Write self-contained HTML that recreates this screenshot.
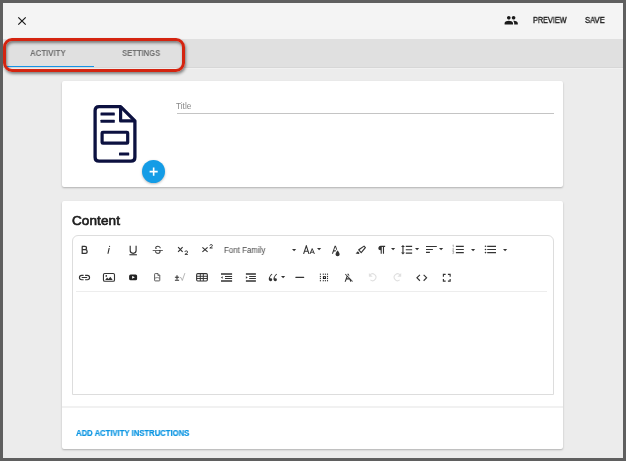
<!DOCTYPE html>
<html><head><meta charset="utf-8">
<style>
*{margin:0;padding:0;box-sizing:border-box}
html,body{width:626px;height:461px;overflow:hidden;background:#5f5f5f;font-family:"Liberation Sans",sans-serif}
.abs{position:absolute}
#frame{position:absolute;left:3px;top:3px;width:620px;height:455px;background:#ececec;overflow:hidden}
#hdr{position:absolute;left:0;top:0;width:620px;height:36px;background:#f4f4f4}
#tabs{position:absolute;left:0;top:36px;width:620px;height:28px;background:#e0e0e0}
.card{position:absolute;background:#fff;border-radius:2px;box-shadow:0 1px 2px rgba(0,0,0,.25)}
.t{position:absolute;white-space:nowrap;line-height:1;will-change:transform}
</style></head><body>
<div id="frame">
  <div id="hdr">
    <svg class="abs" style="left:14.2px;top:13.3px" width="10" height="10" viewBox="0 0 10 10"><path d="M1.3 1.3L8.7 8.7M8.7 1.3L1.3 8.7" stroke="#1a1a1a" stroke-width="1.2"/></svg>
    <svg class="abs" style="left:501.1px;top:10.2px" width="14.4" height="14.4" viewBox="0 0 24 24"><path d="M16 11c1.66 0 2.99-1.34 2.99-3S17.66 5 16 5c-1.66 0-3 1.34-3 3s1.34 3 3 3zm-8 0c1.66 0 2.99-1.34 2.99-3S9.66 5 8 5C6.34 5 5 6.34 5 8s1.34 3 3 3zm0 2c-2.33 0-7 1.170-7 3.5V19h14v-2.5c0-2.33-4.670-3.5-7-3.5zm8 0c-.29 0-.62.02-.97.05 1.16.84 1.97 1.97 1.970 3.45V19h6v-2.5c0-2.33-4.67-3.5-6-3.5z" fill="#1a1a1a"/></svg>
    <div class="t" style="left:529.5px;top:14.2px;font-size:8.2px;color:#1a1a1a;-webkit-text-stroke:0.35px #1a1a1a;transform:scaleX(0.89);transform-origin:0 0">PREVIEW</div>
    <div class="t" style="left:582px;top:14.2px;font-size:8.2px;color:#1a1a1a;-webkit-text-stroke:0.35px #1a1a1a;transform:scaleX(0.93);transform-origin:0 0">SAVE</div>
  </div>
  <div id="tabs">
    <div class="t" style="left:27px;top:10.3px;font-size:8.6px;font-weight:bold;color:#707070;transform:scaleX(0.91);transform-origin:0 0">ACTIVITY</div>
    <div class="t" style="left:118.8px;top:10.3px;font-size:8.6px;font-weight:bold;color:#707070;transform:scaleX(0.89);transform-origin:0 0">SETTINGS</div>
    <div class="abs" style="left:1px;top:26.6px;width:90px;height:1.7px;background:#1592e6"></div>
    <div class="abs" style="left:0;top:28px;width:620px;height:1px;background:#d7d7d7"></div>
    <div class="abs" style="left:0;top:29px;width:620px;height:1px;background:#f1f1f1"></div>
  </div>
  <!-- annotation -->
  <div class="abs" style="left:0px;top:35px;width:182px;height:34px;border:3px solid #d42410;border-radius:9px;box-shadow:1px 2px 3px rgba(0,0,0,.45), inset 1px 2px 3px rgba(0,0,0,.45)"></div>

  <div class="card" style="left:59px;top:78px;width:501px;height:106px">
    <svg class="abs" style="left:28px;top:19px" width="50" height="70" viewBox="90 100 50 70">
      <path d="M99.1 106.6H120.6L134.9 120.9V157.2Q134.9 161.2 130.9 161.2H99.1Q95.1 161.2 95.1 157.2V110.6Q95.1 106.6 99.1 106.6Z" fill="none" stroke="#0c1140" stroke-width="3.3" stroke-linejoin="round"/>
      <path d="M120.6 106.6V120.9H134.9" fill="none" stroke="#0c1140" stroke-width="3.2" stroke-linejoin="round"/>
      <rect x="100.5" y="112.5" width="14.3" height="3.1" rx="0.6" fill="#0c1140"/>
      <rect x="100.5" y="119.7" width="14.3" height="3.1" rx="0.6" fill="#0c1140"/>
      <rect x="102.1" y="132.25" width="25.6" height="10.95" rx="0.8" fill="none" stroke="#0c1140" stroke-width="3.2"/>
      <rect x="119" y="152.5" width="10.2" height="3.1" rx="0.6" fill="#0c1140"/>
    </svg>
    <div class="abs" style="left:79.5px;top:79.2px;width:23.3px;height:23.3px;border-radius:50%;background:#149ce6;box-shadow:0 1px 2.5px rgba(0,0,0,.28)">
      <svg class="abs" style="left:0;top:0" width="23.3" height="23.3" viewBox="0 0 23.3 23.3"><path d="M11.65 7.6v8.1M7.6 11.65h8.1" stroke="#fff" stroke-width="1.6"/></svg>
    </div>
    <div class="t" style="left:114.4px;top:20.6px;font-size:8.3px;color:#888">Title</div>
    <div class="abs" style="left:114.5px;top:31.6px;width:377.3px;height:1.3px;background:#c4c4c4"></div>
  </div>

  <div class="card" style="left:59px;top:198px;width:501px;height:248px">
    <div class="t" style="left:10px;top:12.6px;font-size:13.5px;font-weight:normal;-webkit-text-stroke:0.7px #1e1e1e;color:#1e1e1e;letter-spacing:0.1px;transform:scaleX(1);transform-origin:0 0">Content</div>
    <div class="abs" style="left:10px;top:34px;width:482px;height:160px;border:1px solid #dddddd;border-radius:6px 6px 0 0">
      <div class="abs" style="left:3px;top:55px;width:471px;height:1px;background:#ededed"></div>
    </div>
    <div class="abs" style="left:0;top:205px;width:501px;height:1.5px;background:#f1f1f1"></div>
    <div class="t" style="left:14px;top:228.6px;font-size:8.2px;font-weight:bold;color:#0b95e2;-webkit-text-stroke:0.2px #0b95e2;transform:scaleX(0.94);transform-origin:0 0">ADD ACTIVITY INSTRUCTIONS</div>
  </div>
<svg class="abs" style="left:75.00px;top:240.00px" width="14.00" height="14.00" viewBox="78 243 14 14"><path d="M82.2 246.4V253.3H85.3Q87.15 253.3 87.15 251.4Q87.15 249.55 85.3 249.55H82.2M82.2 249.55H84.9Q86.55 249.55 86.55 248Q86.55 246.4 84.9 246.4H81.8" fill="none" stroke="#333" stroke-width="1.25"/></svg>
<svg class="abs" style="left:99.22px;top:240.12px" width="13.56" height="13.56" viewBox="0 0 24 24"><path d="M11.76,9h2l-2.2,10h-2Zm1.68-4a1,1,0,1,0,1,1,1,1,0,0,0-1-1Z" fill="#333" /></svg>
<svg class="abs" style="left:123.00px;top:239.00px" width="15.00" height="16.00" viewBox="126 242 15 16"><path d="M130.2 245.8V250.6Q130.2 253.3 133.15 253.3Q136.1 253.3 136.1 250.6V245.8" fill="none" stroke="#333" stroke-width="1.15"/><path d="M129.4 254.75H136.9" stroke="#333" stroke-width="1.1"/></svg>
<svg class="abs" style="left:147.97px;top:240.12px" width="13.56" height="13.56" viewBox="0 0 24 24"><path d="M3,12.2H21v1.5H16.63a3.6,3.6,0,0,1,.35,1.59,3.25,3.25,0,0,1-1.31,2.7A5.55,5.55,0,0,1,12.2,19a6.44,6.44,0,0,1-2.62-.54,4.46,4.46,0,0,1-1.89-1.49,3.67,3.67,0,0,1-.67-2.16V14.7H9.02v.11a2.18,2.18,0,0,0,.85,1.83,3.69,3.69,0,0,0,2.33.68,3.39,3.39,0,0,0,2.08-.55,1.73,1.73,0,0,0,.7-1.47,1.7,1.7,0,0,0-.65-1.43,3,3,0,0,0-.27-.18H3ZM16.34,7.06A3.96,3.96,0,0,0,14.62,5.55,5.46,5.46,0,0,0,12.13,5,5.99,5.99,0,0,0,8.99,5.85,2.99,2.99,0,0,0,7.49,8.52,3.45,3.45,0,0,0,8.06,10.5H10.81a2.48,2.48,0,0,1-1.31-1.16,1.56,1.56,0,0,1-.08-.65,1.67,1.67,0,0,1,.72-1.44,3.87,3.87,0,0,1,2.34-.56,3.57,3.57,0,0,1,2.28.65,2.23,2.23,0,0,1,.83,1.81v.04h1.7V9.12A3.61,3.61,0,0,0,16.34,7.06Z" fill="#333" /></svg>
<svg class="abs" style="left:172.00px;top:241.00px" width="16.00" height="13.00" viewBox="175 244 16 13"><path d="M178.1 247.1L182.6 251.9M182.6 247.1L178.1 251.9" stroke="#333" stroke-width="1.15"/><path d="M184.8 251.9Q185 250.9 186.3 250.9Q187.6 250.9 187.6 252Q187.6 252.7 186.8 253.2L184.9 254.4H187.9" fill="none" stroke="#333" stroke-width="0.95"/></svg>
<svg class="abs" style="left:196.00px;top:239.00px" width="16.00" height="14.00" viewBox="199 242 16 14"><path d="M202.4 247.4L207.6 251.9M207.6 247.4L202.4 251.9" stroke="#333" stroke-width="1.15"/><path d="M209.8 245.5Q210 244.6 211.2 244.6Q212.4 244.6 212.4 245.6Q212.4 246.3 211.6 246.8L209.8 248H212.6" fill="none" stroke="#333" stroke-width="0.95"/></svg>
<div class="t" style="left:220.7px;top:242.9px;font-size:8.3px;color:#444;transform:scaleX(0.955);transform-origin:0 0">Font Family</div>
<svg class="abs" style="left:288.30px;top:244.50px" width="6.20" height="4.30" viewBox="291.3 247.5 6.199999999999989 4.300000000000011"><path d="M292.3 248.5H296.5L294.40000000000003 250.8Z" fill="#333"/></svg>
<svg class="abs" style="left:300.00px;top:242.30px" width="12.50" height="8.70" viewBox="0 0 12.5 8.7" preserveAspectRatio="none"><path d="M0.6 9L3.3 0.8L6 9M1.5 6.3H5.1" fill="none" stroke="#333" stroke-width="1.05"/><path d="M7 9L9.2 3.6L11.4 9M7.7 7.2H10.7" fill="none" stroke="#333" stroke-width="0.95"/></svg>
<svg class="abs" style="left:313.30px;top:244.30px" width="6.20" height="4.30" viewBox="316.3 247.3 6.199999999999989 4.300000000000011"><path d="M317.3 248.3H321.5L319.40000000000003 250.60000000000002Z" fill="#333"/></svg>
<svg class="abs" style="left:326.42px;top:240.12px" width="13.56" height="13.56" viewBox="0 0 24 24"><path d="M15.2,13.494s-3.6,3.9-3.6,6.3a3.65,3.65,0,0,0,7.3.1v-.1C18.9,17.394,15.2,13.494,15.2,13.494Zm-1.47-1.357.669-.724L12.1,5h-2l-5,14h2l1.43-4h2.943A24.426,24.426,0,0,1,13.726,12.137ZM11.1,6.9l2.152,6.1H8.9Z" fill="#333" /></svg>
<svg class="abs" style="left:350.72px;top:239.82px" width="13.56" height="13.56" viewBox="0 0 24 24"><path d="M9.91752,12.24082l7.74791-5.39017,1.17942,1.29591-6.094,7.20747L9.91752,12.24082M7.58741,12.652l4.53533,4.98327a.93412.93412,0,0,0,1.39531-.0909L20.96943,8.7314A.90827.90827,0,0,0,20.99075,7.533l-2.513-2.76116a.90827.90827,0,0,0-1.19509-.09132L7.809,11.27135A.93412.93412,0,0,0,7.58741,12.652ZM2.7939,18.52772,8.41126,19.5l1.47913-1.34617-3.02889-3.328Z" fill="#333" /></svg>
<svg class="abs" style="left:372.12px;top:240.12px" width="13.56" height="13.56" viewBox="0 0 24 24"><path d="M10.15,5A4.11,4.11,0,0,0,6.08,8.18,4,4,0,0,0,10,13v6h2V7h2V19h2V7h2V5Z" fill="#333" /></svg>
<svg class="abs" style="left:386.50px;top:244.30px" width="6.20" height="4.30" viewBox="389.5 247.3 6.199999999999989 4.300000000000011"><path d="M390.5 248.3H394.7L392.6 250.60000000000002Z" fill="#333"/></svg>
<svg class="abs" style="left:397.12px;top:239.72px" width="13.56" height="13.56" viewBox="0 0 24 24"><path d="M6.25,7h2.5L5.25,3.5,1.75,7h2.5V17H1.75l3.5,3.5L8.75,17H6.25Zm4-2V7H21.5V5Zm0,14H21.5V17H10.25Zm0-6H21.5V11H10.25Z" fill="#333" /></svg>
<svg class="abs" style="left:410.80px;top:244.30px" width="6.20" height="4.30" viewBox="413.8 247.3 6.199999999999989 4.300000000000011"><path d="M414.8 248.3H419.0L416.90000000000003 250.60000000000002Z" fill="#333"/></svg>
<svg class="abs" style="left:421.00px;top:240.00px" width="16.00" height="13.00" viewBox="424 243 16 13"><path d="M426 246.5H436.8M426 249.5H432.9M426 252.4H429.9" stroke="#333" stroke-width="1.15"/></svg>
<svg class="abs" style="left:435.20px;top:244.20px" width="6.20" height="4.30" viewBox="438.2 247.2 6.199999999999989 4.300000000000011"><path d="M439.2 248.2H443.4L441.3 250.5Z" fill="#333"/></svg>
<svg class="abs" style="left:447.00px;top:240.00px" width="17.00" height="13.00" viewBox="450 243 17 13"><path d="M455.9 246.3H463.8M455.9 249.5H463.8M455.9 252.6H463.8" stroke="#333" stroke-width="1.15"/><path d="M452.6 245.2L453.3 244.9V247.2M452.5 248.6Q452.8 248.2 453.3 248.3Q453.9 248.5 453.5 249.2L452.5 250.3H454M452.5 251.5H453.9L453.1 252.3Q453.9 252.5 453.8 253.2Q453.5 253.9 452.4 253.6" fill="none" stroke="#777" stroke-width="0.55"/></svg>
<svg class="abs" style="left:467.20px;top:244.50px" width="6.20" height="4.30" viewBox="470.2 247.5 6.199999999999989 4.300000000000011"><path d="M471.2 248.5H475.4L473.3 250.8Z" fill="#333"/></svg>
<svg class="abs" style="left:479.00px;top:240.00px" width="17.00" height="13.00" viewBox="482 243 17 13"><path d="M487.2 246.3H496M487.2 249.5H496M487.2 252.6H496" stroke="#333" stroke-width="1.15"/><circle cx="485.5" cy="246.3" r="0.8" fill="#333"/><circle cx="485.5" cy="249.5" r="0.8" fill="#333"/><circle cx="485.5" cy="252.6" r="0.8" fill="#333"/></svg>
<svg class="abs" style="left:499.30px;top:244.50px" width="6.20" height="4.30" viewBox="502.3 247.5 6.199999999999989 4.300000000000011"><path d="M503.3 248.5H507.5L505.40000000000003 250.8Z" fill="#333"/></svg>
<svg class="abs" style="left:73.00px;top:268.00px" width="18.00" height="14.00" viewBox="76 271 18 14"><path d="M83.6 275.4H81.6A2.15 2.15 0 0 0 81.6 279.7H83.6M85.1 275.4H87.4A2.15 2.15 0 0 1 87.4 279.7H85.1" fill="none" stroke="#333" stroke-width="1.15"/><path d="M82.1 277.55H86.8" stroke="#333" stroke-width="1.05" stroke-linecap="round"/></svg>
<svg class="abs" style="left:97.00px;top:267.00px" width="18.00" height="15.00" viewBox="100 270 18 15"><rect x="103.45" y="273.45" width="11.05" height="7.85" rx="1.3" fill="none" stroke="#333" stroke-width="1.1"/><circle cx="106.3" cy="275.9" r="0.85" fill="#333"/><path d="M105.2 279.9L107.1 277.5L108.5 278.9L110.3 276.8L112.7 279.9Z" fill="#333"/></svg>
<svg class="abs" style="left:123.00px;top:268.00px" width="14.00" height="13.00" viewBox="126 271 14 13"><rect x="129.1" y="274.5" width="8" height="5.75" rx="1.5" fill="#222"/><path d="M132.1 275.9L134.9 277.37L132.1 278.85Z" fill="#fff"/></svg>
<svg class="abs" style="left:151.20px;top:270.30px" width="6.40" height="8.50" viewBox="0 0 6.4 8.5" preserveAspectRatio="none"><path d="M1.2 0.6H4L5.8 2.4V7.3Q5.8 7.9 5.2 7.9H1.2Q0.6 7.9 0.6 7.3V1.2Q0.6 0.6 1.2 0.6z" fill="none" stroke="#555" stroke-width="0.95"/><path d="M3.9 0.6V2.5H5.8" fill="none" stroke="#555" stroke-width="0.8"/><path d="M0.6 5.2Q3.2 3.9 5.8 5.2" fill="none" stroke="#666" stroke-width="0.8"/></svg>
<svg class="abs" style="left:169.00px;top:267.00px" width="16.00" height="14.00" viewBox="172 270 16 14"><path d="M174.9 277.3H179.1M177 275.2V279.4M174.9 280.3H179.1" stroke="#333" stroke-width="1.1"/><path d="M179.8 277.9L180.9 277.4L182.3 280.5L184.9 273.1" fill="none" stroke="#9a9a9a" stroke-width="0.7"/></svg>
<svg class="abs" style="left:189.00px;top:267.00px" width="20.00" height="15.00" viewBox="192 270 20 15"><rect x="196.65" y="273.65" width="10.7" height="7.3" rx="1.1" fill="none" stroke="#333" stroke-width="1.1"/><path d="M200.3 273.6V281M203.3 273.6V281M196.6 276.3H207.4M196.6 278.5H207.4" stroke="#333" stroke-width="0.95"/></svg>
<svg class="abs" style="left:215.00px;top:267.00px" width="18.00" height="15.00" viewBox="218 270 18 15"><path d="M221 273.9H232.1M221 281.1H232.1" stroke="#333" stroke-width="1.5"/><path d="M225 276.5H232.1M225 278.5H232.1" stroke="#333" stroke-width="1"/><path d="M222.7 276.2L220.9 277.5L222.7 278.8Z" fill="#333"/></svg>
<svg class="abs" style="left:240.00px;top:267.00px" width="17.00" height="15.00" viewBox="243 270 17 15"><path d="M245.9 273.9H255.9M245.9 281.1H255.9" stroke="#333" stroke-width="1.5"/><path d="M249.2 276.5H255.9M249.2 278.5H255.9" stroke="#333" stroke-width="1"/><path d="M245.9 276.2L247.7 277.5L245.9 278.8Z" fill="#333"/></svg>
<svg class="abs" style="left:263.07px;top:268.12px" width="13.56" height="13.56" viewBox="0 0 24 24"><path d="M10.32,5l.94,1.32A12.88,12.88,0,0,0,8.17,9.4a5.54,5.54,0,0,0-1,3.08v.34q.36-.05.67-.08a4.8,4.8,0,0,1,.58-.04,2.52,2.52,0,0,1,1.87.74,2.49,2.49,0,0,1,.72,1.81,2.73,2.73,0,0,1-.75,1.94A2.68,2.68,0,0,1,8.23,18a3.11,3.11,0,0,1-2.43-1.06,3.94,3.94,0,0,1-.9-2.7A7.43,7.43,0,0,1,6.1,10.13,12.16,12.16,0,0,1,10.32,5Zm8.3,0,.94,1.32a12.88,12.88,0,0,0-3.09,3.08,5.54,5.54,0,0,0-1,3.08v.34q.33-.05.64-.08a4.38,4.38,0,0,1,.55-.04,2.53,2.53,0,0,1,1.88.74,2.47,2.47,0,0,1,.74,1.85,2.72,2.72,0,0,1-.76,1.94A2.7,2.7,0,0,1,16.53,18a3.08,3.08,0,0,1-2.41-1.06,3.97,3.97,0,0,1-.9-2.71,7.43,7.43,0,0,1,1.2-4.1A12.16,12.16,0,0,1,18.62,5Z" fill="#333" /></svg>
<svg class="abs" style="left:277.40px;top:272.30px" width="6.20" height="4.30" viewBox="280.4 275.3 6.199999999999989 4.300000000000011"><path d="M281.4 276.3H285.59999999999997L283.5 278.6Z" fill="#333"/></svg>
<svg class="abs" style="left:290.02px;top:267.12px" width="13.56" height="13.56" viewBox="0 0 24 24"><path d="M5,12h14 c0.6,0,1,0.4,1,1s-0.4,1-1,1H5c-0.6,0-1-0.4-1-1S4.4,12,5,12z" fill="#333" /></svg>
<svg class="abs" style="left:314.00px;top:268.00px" width="14.00" height="13.00" viewBox="317 271 14 13"><rect x="319.85" y="273.60" width="1.1" height="1.2" fill="#333"/><rect x="319.85" y="280.10" width="1.1" height="1.2" fill="#333"/><rect x="322.75" y="273.60" width="1.1" height="1.2" fill="#333"/><rect x="322.75" y="280.10" width="1.1" height="1.2" fill="#333"/><rect x="324.85" y="273.60" width="1.1" height="1.2" fill="#333"/><rect x="324.85" y="280.10" width="1.1" height="1.2" fill="#333"/><rect x="326.95" y="273.60" width="1.1" height="1.2" fill="#333"/><rect x="326.95" y="280.10" width="1.1" height="1.2" fill="#333"/><rect x="319.85" y="275.90" width="1.1" height="1.2" fill="#333"/><rect x="326.95" y="275.90" width="1.1" height="1.2" fill="#333"/><rect x="319.85" y="277.90" width="1.1" height="1.2" fill="#333"/><rect x="326.95" y="277.90" width="1.1" height="1.2" fill="#333"/><rect x="322.9" y="276.2" width="3" height="2.8" fill="#111"/><rect x="323.9" y="277.1" width="1" height="1" fill="#fff"/></svg>
<svg class="abs" style="left:338.97px;top:267.72px" width="13.56" height="13.56" viewBox="0 0 24 24"><path d="M11.48,10.09l-1.2-1.21L8.8,7.41,6.43,5,5.37,6.1,8.25,9,4.66,19h2l1.43-4h5.14l1.43,4h2l-.89-2.51L18.27,19l1.07-1.06L14.59,13.2ZM8.8,13l.92-2.56L12.27,13Zm.56-7.15L9.66,5h2l1.75,4.9Z" fill="#333" /></svg>
<svg class="abs" style="left:363.00px;top:267.00px" width="14.00" height="14.00" viewBox="366 270 14 14"><path d="M369.9 275.0A3.4 3.4 0 1 1 370.4 279.9" fill="none" stroke="#e0e0e0" stroke-width="1.1"/><path d="M368.9 272.9V276.8H372.7Z" fill="#e0e0e0"/></svg>
<svg class="abs" style="left:387.00px;top:267.00px" width="14.00" height="14.00" viewBox="390 270 14 14"><path d="M400.2 275.0A3.4 3.4 0 1 0 399.7 279.9" fill="none" stroke="#e0e0e0" stroke-width="1.1"/><path d="M401.2 272.9V276.8H397.4Z" fill="#e0e0e0"/></svg>
<svg class="abs" style="left:412.12px;top:267.82px" width="13.56" height="13.56" viewBox="0 0 24 24"><path d="M9.4,16.6,4.8,12,9.4,7.4,8,6,2,12l6,6Zm5.2,0L19.2,12,14.6,7.4,16,6l6,6-6,6Z" fill="#333" /></svg>
<svg class="abs" style="left:436.87px;top:267.82px" width="13.56" height="13.56" viewBox="0 0 24 24"><path d="M7,14H5v5h5V17H7ZM5,10H7V7h3V5H5Zm12,7H14v2h5V14H17ZM14,5V7h3v3h2V5Z" fill="#333" /></svg>
</div>
</body></html>
